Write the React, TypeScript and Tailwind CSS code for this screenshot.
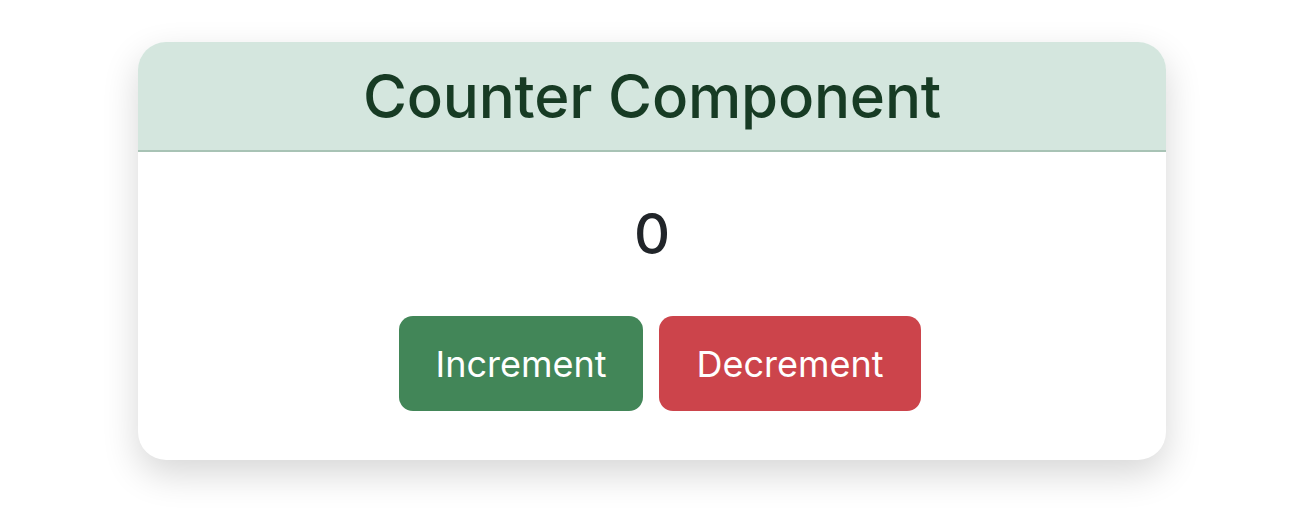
export default function App() {
  return (
    <div
      className="min-h-[518px] w-full bg-white flex justify-center pt-[42px]"
      style={{ fontFamily: "Inter, 'Noto Sans', sans-serif" }}
    >
      <div className="w-[1028px] h-[418px] rounded-[28px] bg-white overflow-hidden shadow-[0_14px_36px_rgba(0,0,0,0.16)] flex flex-col">
        <div className="h-[110px] bg-[#d4e6de] border-b-2 border-[#a8c3b5] flex items-center justify-center">
          <h2 className="text-[60px] leading-[72px] font-medium text-[#173b24] tracking-[-0.2px]">
            Counter Component
          </h2>
        </div>
        <div className="flex flex-col items-center pt-12 pb-12">
          <div className="text-[56px] leading-[68px] font-medium text-[#212529]">0</div>
          <div className="mt-12 ml-4 flex gap-4">
            <button className="h-[95px] w-[244px] rounded-[14px] bg-[#428658] text-white text-[36px] leading-none">
              Increment
            </button>
            <button className="h-[95px] w-[262px] rounded-[14px] bg-[#cc444b] text-white text-[36px] leading-none">
              Decrement
            </button>
          </div>
        </div>
      </div>
    </div>
  );
}
